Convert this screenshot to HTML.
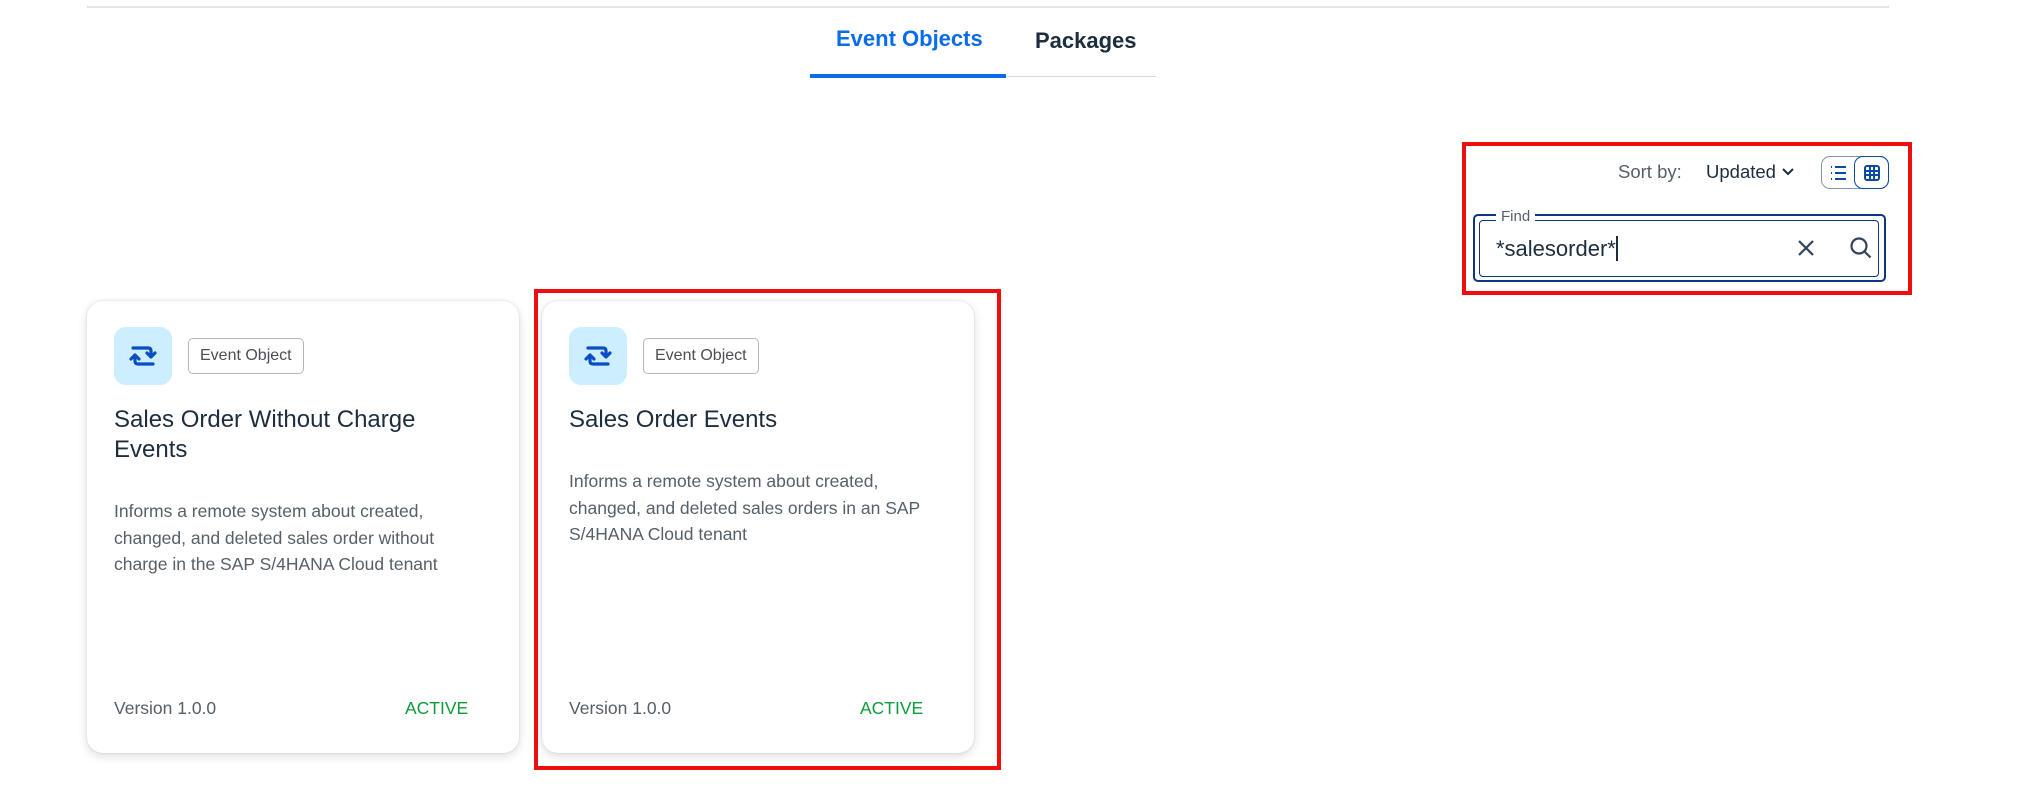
<!DOCTYPE html>
<html><head><meta charset="utf-8"><style>
*{margin:0;padding:0;box-sizing:border-box}
body{width:2028px;height:788px;background:#fff;font-family:"Liberation Sans",Arial,sans-serif;position:relative;overflow:hidden;color:#1d2d3e}
.a{position:absolute;white-space:nowrap}
.card{position:absolute;top:301px;width:432px;height:452px;background:#fff;border-radius:16px;box-shadow:0 0 2px rgba(0,0,0,.12),0 3px 10px rgba(0,0,0,.14)}
.ic{position:absolute;left:27px;top:26px;width:58px;height:58px;border-radius:12px;background:#cdeefe}
.tag{position:absolute;left:101px;top:37px;height:36px;padding:0 11px;border:1px solid #b5b8bb;border-radius:5px;font-size:16px;line-height:34px;color:#4a4f55}
.t{position:absolute;left:27px;top:104px;font-size:24px;line-height:30px;color:#1d2d3e;width:380px}
.d{position:absolute;left:27px;top:197px;font-size:17.5px;line-height:26.5px;color:#556069;width:400px;white-space:nowrap}
.v{position:absolute;left:27px;top:397px;font-size:17.5px;color:#556069}
.s{position:absolute;left:318px;top:397px;font-size:17.5px;color:#0c9c39}
</style></head><body>
<div class="a" style="left:87px;top:6px;width:1802px;height:2px;background:#e5e5e5"></div>
<div class="a" style="left:810px;top:74px;width:196px;height:4px;background:#0a6ce9"></div>
<div class="a" style="left:1006px;top:76px;width:150px;height:1px;background:#d9d9d9"></div>
<div class="a" style="left:836px;top:26px;font-size:22px;font-weight:bold;color:#0a6ce9">Event Objects</div>
<div class="a" style="left:1035px;top:28px;font-size:22px;font-weight:bold;color:#1d2d3e">Packages</div>

<div class="a" style="left:1462px;top:142px;width:450px;height:153px;border:4px solid #f00d0d"></div>
<div class="a" style="left:1618px;top:161px;font-size:18.5px;color:#556069">Sort by:</div>
<div class="a" style="left:1706px;top:161px;font-size:18.5px;color:#1d2d3e">Updated</div>
<svg class="a" style="left:1781px;top:167px" width="14" height="10" viewBox="0 0 14 10"><path d="M2 2l5 5 5-5" fill="none" stroke="#1d2d3e" stroke-width="2"/></svg>
<div class="a" style="left:1821px;top:156px;width:68px;height:33px;border:1px solid #8396a8;border-radius:9px"></div>
<div class="a" style="left:1854px;top:156px;width:35px;height:33px;border:1.5px solid #0a4aa5;border-radius:9px"></div>
<svg class="a" style="left:1829px;top:163px" width="20" height="20" viewBox="0 0 20 20" fill="none" stroke="#0a4aa5" stroke-width="2"><path d="M2 4h1M6 4h11M2 10h1M6 10h11M2 16h1M6 16h11"/></svg>
<svg class="a" style="left:1863px;top:164px" width="18" height="18" viewBox="0 0 18 18" fill="none" stroke="#0a4aa5" stroke-width="2"><rect x="2" y="2" width="14" height="14" rx="2"/><path d="M7 2v14M11 2v14M2 7h14M2 11h14"/></svg>

<div class="a" style="left:1473px;top:214px;width:413px;height:68px;border:2px solid #0a3585;border-radius:5px"></div>
<div class="a" style="left:1479px;top:220px;width:400px;height:57px;border:1px solid #0a3585;border-radius:4px"></div>
<div class="a" style="left:1496px;top:208px;padding:0 5px;background:#fff;font-size:15px;color:#556069">Find</div>
<div class="a" style="left:1496px;top:236px;font-size:22px;color:#1d2d3e">*salesorder*<span style="display:inline-block;width:2px;height:25px;background:#1d2d3e;vertical-align:-5px"></span></div>
<svg class="a" style="left:1796px;top:238px" width="20" height="20" viewBox="0 0 20 20"><path d="M3 3l14 14M17 3L3 17" stroke="#32445a" stroke-width="2.2"/></svg>
<svg class="a" style="left:1849px;top:236px" width="24" height="24" viewBox="0 0 24 24" fill="none" stroke="#32445a" stroke-width="2.2"><circle cx="10" cy="10" r="7.5"/><path d="M15.5 15.5l6 6"/></svg>

<div class="card" style="left:87px">
<div class="ic"><svg width="58" height="58" viewBox="0 0 58 58" fill="none" stroke="#0a4ec4" stroke-width="3.2" stroke-linecap="round" stroke-linejoin="round"><path d="M19 21h15q3 0 3 3v5M33 26l4 4 4-4M39 37H24q-3 0-3-3v-5M17 32l4-4 4 4"/></svg></div>
<div class="tag">Event Object</div>
<div class="t">Sales Order Without Charge<br>Events</div>
<div class="d">Informs a remote system about created,<br>changed, and deleted sales order without<br>charge in the SAP S/4HANA Cloud tenant</div>
<div class="v">Version 1.0.0</div><div class="s">ACTIVE</div>
</div>
<div class="card" style="left:542px">
<div class="ic"><svg width="58" height="58" viewBox="0 0 58 58" fill="none" stroke="#0a4ec4" stroke-width="3.2" stroke-linecap="round" stroke-linejoin="round"><path d="M19 21h15q3 0 3 3v5M33 26l4 4 4-4M39 37H24q-3 0-3-3v-5M17 32l4-4 4 4"/></svg></div>
<div class="tag">Event Object</div>
<div class="t">Sales Order Events</div>
<div class="d" style="top:167px">Informs a remote system about created,<br>changed, and deleted sales orders in an SAP<br>S/4HANA Cloud tenant</div>
<div class="v">Version 1.0.0</div><div class="s">ACTIVE</div>
</div>
<div class="a" style="left:534px;top:289px;width:467px;height:481px;border:4px solid #f00d0d"></div>
</body></html>
